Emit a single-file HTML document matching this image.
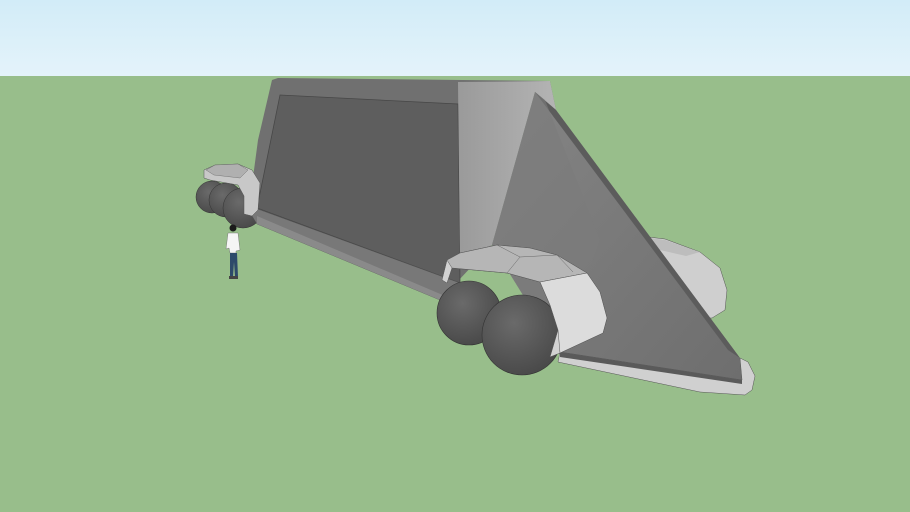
<!DOCTYPE html>
<html><head><meta charset="utf-8"><style>
html,body{margin:0;padding:0;width:910px;height:512px;overflow:hidden}
svg{display:block}
</style></head><body>
<svg width="910" height="512" viewBox="0 0 910 512" xmlns="http://www.w3.org/2000/svg">
<defs>
<linearGradient id="sky" x1="0" y1="0" x2="0" y2="1"><stop offset="0" stop-color="#d2ecf8"/><stop offset="1" stop-color="#e4f3fa"/></linearGradient>
<radialGradient id="wh" cx="0.4" cy="0.35" r="0.7"><stop offset="0" stop-color="#6a6a6a"/><stop offset="1" stop-color="#484848"/></radialGradient>
<linearGradient id="front" x1="0" y1="0" x2="1" y2="0"><stop offset="0" stop-color="#9a9a9a"/><stop offset="1" stop-color="#b4b4b4"/></linearGradient>
<linearGradient id="wedge" x1="0" y1="0" x2="1" y2="1"><stop offset="0" stop-color="#858585"/><stop offset="1" stop-color="#6e6e6e"/></linearGradient>
</defs>
<rect width="910" height="76" fill="url(#sky)"/>
<rect y="76" width="910" height="436" fill="#98be8b"/>

<!-- far right fender -->
<polygon points="640,236 665,239 700,252 720,268 727,290 725,310 712,318 698,318 650,260" fill="#cfcfcf" stroke="#555" stroke-width="0.5"/>
<polygon points="650,238 665,240 700,252 686,256 660,250" fill="#bdbdbd"/>

<!-- left wheels -->
<circle cx="212" cy="197" r="16" fill="url(#wh)" stroke="#333" stroke-width="0.5"/>
<circle cx="226" cy="200" r="17" fill="url(#wh)" stroke="#333" stroke-width="0.5"/>
<circle cx="243" cy="208" r="20" fill="url(#wh)" stroke="#333" stroke-width="0.5"/>

<!-- body outer side -->
<polygon points="272,80 278,78 550,81 556,110 535,92 492,245 440,300 262,222 250,200 258,140" fill="#707070"/>
<!-- dark panel -->
<polygon points="280,95 458,104 460,283 257,208" fill="#5e5e5e" stroke="#474747" stroke-width="0.8"/>
<!-- bottom rail -->
<polygon points="255,208 460,283 458,300 440,300 257,224 252,216" fill="#787878" stroke="#555" stroke-width="0.5"/>
<polygon points="257,216 445,296 440,300 257,224" fill="#8a8a8a"/>
<!-- front upper light face -->
<polygon points="458,82 550,81 556,110 535,92 492,245 460,262" fill="url(#front)"/>
<!-- wedge -->
<polygon points="535,92 556,110 740,358 742,380 560,355 492,245" fill="url(#wedge)"/>
<polygon points="535,92 556,110 740,358 728,350" fill="#5c5c5c"/>
<polygon points="535,92 545,100 600,240 560,355 492,245" fill="#7c7c7c" opacity="0.6"/>
<!-- nose plate -->
<polygon points="560,352 742,380 740,358 748,362 755,376 752,390 745,395 700,392 558,362" fill="#d0d0d0" stroke="#555" stroke-width="0.5"/>
<polygon points="560,352 742,380 742,384 560,357" fill="#5a5a5a"/>

<!-- left fender -->
<polygon points="204,170 215,165 238,164 252,170 260,183 258,210 252,216 244,214 244,196 238,185 210,180 204,178" fill="#c8c8c8" stroke="#555" stroke-width="0.5"/>
<polygon points="206,170 215,165 238,164 248,170 240,178 214,175" fill="#b0b0b0" stroke="#666" stroke-width="0.4"/>

<!-- front wheels -->
<circle cx="469" cy="313" r="32" fill="url(#wh)" stroke="#333" stroke-width="0.6"/>
<circle cx="522" cy="335" r="40" fill="url(#wh)" stroke="#333" stroke-width="0.6"/>

<!-- front fender -->
<polygon points="442,280 447,260 460,253 497,245 530,248 557,255 587,273 600,292 607,318 603,333 560,353 550,357 558,330 550,305 540,282 507,273 452,268 447,283" fill="#d2d2d2" stroke="#555" stroke-width="0.5"/>
<polygon points="447,260 460,253 497,245 530,248 557,255 587,273 540,282 507,273 452,268" fill="#b6b6b6" stroke="#555" stroke-width="0.5"/>
<polyline points="497,245 520,257 507,273" fill="none" stroke="#666" stroke-width="0.5"/>
<polyline points="520,257 557,255 573,272" fill="none" stroke="#666" stroke-width="0.5"/>
<polygon points="540,282 587,273 600,292 607,318 603,333 560,353 558,330 550,305" fill="#dcdcdc" stroke="#555" stroke-width="0.5"/>

<!-- person -->
<circle cx="233" cy="228" r="3.5" fill="#1b1b1b"/>
<polygon points="228,233 238,233 240,250 236,251 236,253 230,253 229,248 226,249" fill="#f5f5f5" stroke="#666" stroke-width="0.4"/>
<polygon points="230,253 237,253 238,277 235,277 234,262 233,277 230,277" fill="#2d4a6a"/>
<rect x="229" y="276" width="9" height="3" fill="#444"/>
</svg>
</body></html>
